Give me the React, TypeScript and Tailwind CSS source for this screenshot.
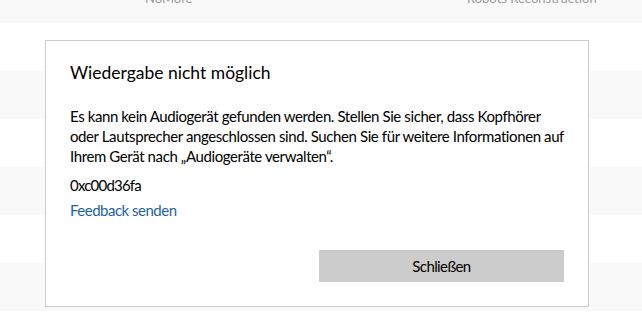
import React from "react";

const rows = Array.from({ length: 8 }, (_, i) => i);

export default function App() {
  return (
    <div
      className="relative h-[331px] w-[642px] overflow-hidden bg-white"
      style={{ fontFamily: 'Lato, "Noto Sans", sans-serif' }}
    >
      {/* list behind the dialog */}
      <div className="-mt-[25px] flex flex-col">
        {rows.map((i) => (
          <div
            key={i}
            className={`flex h-12 items-center text-[13px] text-[#9a9a9a] ${
              i % 2 === 0 ? "bg-[#f9f9f9]" : "bg-white"
            }`}
          >
            {i === 0 && (
              <>
                <span className="ml-[145px] w-[322px]">NoMore</span>
                <span>Robots Reconstruction</span>
              </>
            )}
          </div>
        ))}
      </div>

      {/* dialog */}
      <div className="absolute left-[45px] top-[40px] flex h-[267px] w-[544px] flex-col border border-[#cccccc] bg-white px-6 pt-[18px] text-black">
        <h1 className="text-[17.5px] leading-[28px]">Wiedergabe nicht möglich</h1>
        <p className="mt-[19px] whitespace-nowrap text-[15px] leading-[20px] tracking-[-0.4px]">
          Es kann kein Audiogerät gefunden werden. Stellen Sie sicher, dass Kopfhörer
          <br />
          oder Lautsprecher angeschlossen sind. Suchen Sie für weitere Informationen auf
          <br />
          Ihrem Gerät nach „Audiogeräte verwalten“.
        </p>
        <div className="mt-[9px] text-[15px] leading-[20px] tracking-[-0.8px]">0xc00d36fa</div>
        <a className="mt-[5px] text-[15px] leading-[20px] tracking-[-0.5px] text-[#1e62a6]">
          Feedback senden
        </a>
        <div className="mt-[30px] flex justify-end">
          <button className="h-8 w-[245px] bg-[#cccccc] text-[15px] tracking-[-0.6px] text-black">
            Schließen
          </button>
        </div>
      </div>
    </div>
  );
}
